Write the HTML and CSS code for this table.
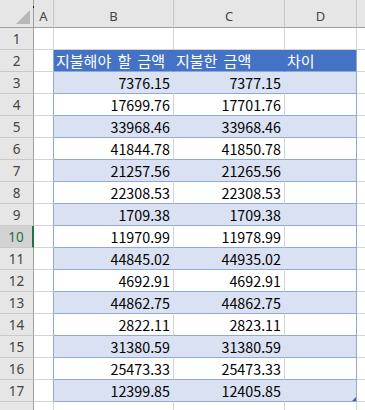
FILE: index.html
```html
<!DOCTYPE html>
<html lang="ko">
<head>
<meta charset="utf-8">
<link rel="stylesheet" href="styles.css">
</head>
<body>
<div class="sheet">
  <div class="hc corner"><span class="tri"></span><span class="dot"></span></div>
  <div class="hc">A</div>
  <div class="hc">B</div>
  <div class="hc">C</div>
  <div class="hc">D</div>
  <div class="hc last"></div>

  <div class="rh">1</div><div class="c"></div><div class="c"></div><div class="c"></div><div class="c"></div><div class="c e"></div>

  <div class="rh">2</div><div class="c ta"></div><div class="c th">지불해야 할 금액</div><div class="c th">지불한 금액</div><div class="c th tr">차이</div><div class="c e"></div>

  <div class="rh">3</div><div class="c ta"></div><div class="c bd n">7376.15</div><div class="c bd n">7377.15</div><div class="c bd tr"></div><div class="c e"></div>
  <div class="rh">4</div><div class="c ta"></div><div class="c wt n">17699.76</div><div class="c wt n">17701.76</div><div class="c wt tr"></div><div class="c e"></div>
  <div class="rh">5</div><div class="c ta"></div><div class="c bd n">33968.46</div><div class="c bd n">33968.46</div><div class="c bd tr"></div><div class="c e"></div>
  <div class="rh">6</div><div class="c ta"></div><div class="c wt n">41844.78</div><div class="c wt n">41850.78</div><div class="c wt tr"></div><div class="c e"></div>
  <div class="rh">7</div><div class="c ta"></div><div class="c bd n">21257.56</div><div class="c bd n">21265.56</div><div class="c bd tr"></div><div class="c e"></div>
  <div class="rh">8</div><div class="c ta"></div><div class="c wt n">22308.53</div><div class="c wt n">22308.53</div><div class="c wt tr"></div><div class="c e"></div>
  <div class="rh">9</div><div class="c ta"></div><div class="c bd n">1709.38</div><div class="c bd n">1709.38</div><div class="c bd tr"></div><div class="c e"></div>
  <div class="rh sel">10</div><div class="c ta"></div><div class="c wt n">11970.99</div><div class="c wt n">11978.99</div><div class="c wt tr"></div><div class="c e"></div>
  <div class="rh">11</div><div class="c ta"></div><div class="c bd n">44845.02</div><div class="c bd n">44935.02</div><div class="c bd tr"></div><div class="c e"></div>
  <div class="rh">12</div><div class="c ta"></div><div class="c wt n">4692.91</div><div class="c wt n">4692.91</div><div class="c wt tr"></div><div class="c e"></div>
  <div class="rh">13</div><div class="c ta"></div><div class="c bd n">44862.75</div><div class="c bd n">44862.75</div><div class="c bd tr"></div><div class="c e"></div>
  <div class="rh">14</div><div class="c ta"></div><div class="c wt n">2822.11</div><div class="c wt n">2823.11</div><div class="c wt tr"></div><div class="c e"></div>
  <div class="rh">15</div><div class="c ta"></div><div class="c bd n">31380.59</div><div class="c bd n">31380.59</div><div class="c bd tr"></div><div class="c e"></div>
  <div class="rh">16</div><div class="c ta"></div><div class="c wt n">25473.33</div><div class="c wt n">25473.33</div><div class="c wt tr"></div><div class="c e"></div>
  <div class="rh">17</div><div class="c ta"></div><div class="c bd n">12399.85</div><div class="c bd n">12405.85</div><div class="c bd tr"><span class="handle"></span></div><div class="c e"></div>

  <div class="rh"></div><div class="c"></div><div class="c"></div><div class="c"></div><div class="c"></div><div class="c e"></div>
</div>
</body>
</html>
```

FILE: styles.css
```css
html, body {
  margin: 0;
  padding: 0;
  background: #ffffff;
  overflow: hidden;
}

.sheet {
  display: grid;
  grid-template-columns: 34px 20px 120px 111px 72px 1fr;
  grid-template-rows: 28px;
  grid-auto-rows: 22px;
  width: 365px;
  height: 410px;
  overflow: hidden;
  font-family: "Noto Sans CJK KR", "Noto Sans", sans-serif;
  font-size: 14.67px;
  color: #000000;
}

.sheet > div {
  box-sizing: border-box;
  position: relative;
  border-right: 1px solid #d4d4d4;
  border-bottom: 1px solid #d4d4d4;
  white-space: nowrap;
}

.hc {
  background: #e6e6e6;
  border-right-color: #c8c8c8 !important;
  border-bottom-color: #9f9f9f !important;
  font-family: "Noto Sans", sans-serif;
  font-size: 13px;
  color: #444444;
  display: flex;
  align-items: center;
  justify-content: center;
  padding-top: 5px;
}

.hc.corner {
  border-right-color: #9f9f9f !important;
}

.hc.last {
  border-right: none;
}

.tri {
  position: absolute;
  right: 3px;
  bottom: 3px;
  width: 0;
  height: 0;
  border-style: solid;
  border-width: 0 0 14px 14px;
  border-color: transparent transparent #b7b7b7 transparent;
}

.dot {
  position: absolute;
  right: -1px;
  top: 6px;
  width: 1px;
  height: 2px;
  background: #222222;
}

.rh {
  background: #e6e6e6;
  border-right-color: #9f9f9f !important;
  border-bottom-color: #c8c8c8 !important;
  font-family: "Noto Sans", sans-serif;
  font-size: 13.5px;
  color: #444444;
  display: flex;
  align-items: center;
  justify-content: center;
  padding-top: 1px;
}

.rh.sel {
  background: #d2d2d2;
  color: #217346;
  border-right: 2px solid #217346 !important;
}

.c {
  line-height: 21px;
  padding: 0 3px;
}

.c.e {
  border-right: none;
}

.c.ta {
  border-right-color: #8ea9db;
}

.th {
  background: #4472c4;
  color: #ffffff;
  border-right-color: #4472c4 !important;
  border-bottom-color: #8ea9db !important;
  padding-left: 2px;
  word-spacing: 2px;
  font-size: 15px;
}

.bd {
  background: #d9e1f2;
  border-right-color: #d9e1f2 !important;
  border-bottom-color: #8ea9db !important;
}

.wt {
  background: #ffffff;
  border-bottom-color: #8ea9db !important;
}

.tr {
  border-right-color: #8ea9db !important;
}

.n {
  text-align: right;
  font-size: 14.3px;
}

.handle {
  position: absolute;
  right: 0;
  bottom: 0;
  width: 0;
  height: 0;
  border-style: solid;
  border-width: 0 0 4px 4px;
  border-color: transparent transparent #3c64b4 transparent;
}
```
